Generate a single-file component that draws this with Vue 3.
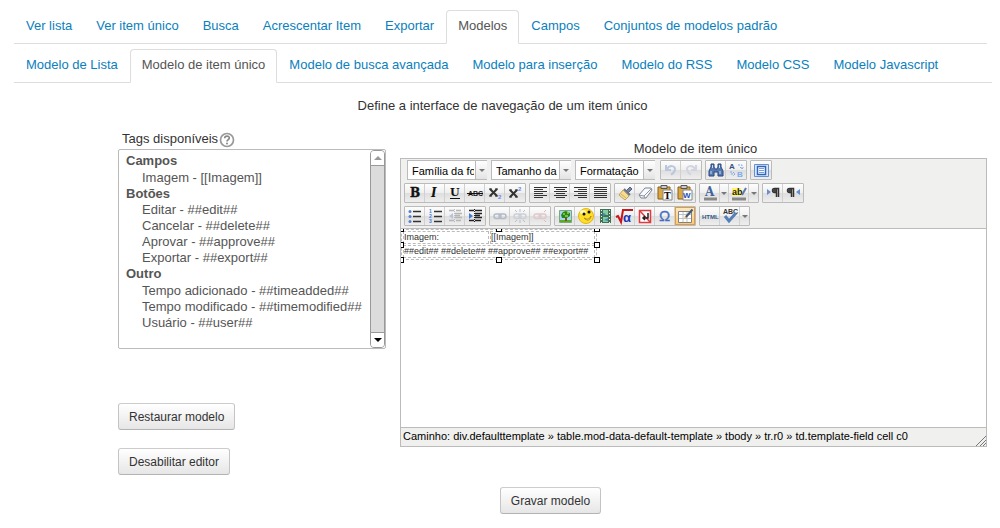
<script setup>
import { ref } from 'vue'

const mainTabs = ['Ver lista', 'Ver item único', 'Busca', 'Acrescentar Item', 'Exportar', 'Modelos', 'Campos', 'Conjuntos de modelos padrão']
const subTabs = ['Modelo de Lista', 'Modelo de item único', 'Modelo de busca avançada', 'Modelo para inserção', 'Modelo do RSS', 'Modelo CSS', 'Modelo Javascript']

const tagGroups = [
  { label: 'Campos', tags: ['Imagem - [[Imagem]]'] },
  { label: 'Botões', tags: ['Editar - ##edit##', 'Cancelar - ##delete##', 'Aprovar - ##approve##', 'Exportar - ##export##'] },
  { label: 'Outro', tags: ['Tempo adicionado - ##timeadded##', 'Tempo modificado - ##timemodified##', 'Usuário - ##user##'] }
]
const selectedTags = ref([])

const dropdowns = ['Família da fonte', 'Tamanho da fonte', 'Formatação']

const lines = (spans) => spans.map(([x, w], i) => `<path d="M${x} ${4.5 + i * 2}h${w}" stroke="#333"/>`).join('')
const serif = 'font-family="DejaVu Serif, serif" font-weight="bold"'
const sans = 'font-family="Liberation Sans, Arial, sans-serif" font-weight="bold"'
const link = (c) => `<g fill="none" stroke="${c}" stroke-width="1.5"><rect x="4" y="8" width="7" height="4.5" rx="2.2"/><rect x="9" y="8" width="7" height="4.5" rx="2.2"/></g>`
const clipboard = '<path d="M3 4h12v12H3z" fill="#d9a843" stroke="#87611d"/><path d="M6 2.5h6v3H6z" fill="#c9c9d2" stroke="#555"/><path d="M8 7h9v10H8z" fill="#fff" stroke="#888"/>'

const icons = {
  undo: '<path d="M5 5v5h5M5.5 9.5c3-5 9-4 8.500 0-.3 2-2 4-4 5" fill="none" stroke="#bac7dd" stroke-width="2"/>',
  redo: '<path d="M15 5v5h-5M14.500 9.500c-3-5-9-4-8.500 0 .3 2 2 4 4 5" fill="none" stroke="#d1d5df" stroke-width="2"/>',
  find: '<path d="M5 4h3v3l1 2h2l1-2V4h3v3l2 4v5h-5v-4H8v4H3v-5l2-4z" fill="#5678b0" stroke="#28487f"/><path d="M5 11v3M14 11v3M6.500 5v3M13.500 5v3" stroke="#c4daf5"/>',
  replace: `<text x="3" y="9" font-size="8" ${sans} fill="#38537f">A</text><text x="11" y="17" font-size="8" ${sans} fill="#7eaaf0">B</text><path d="M5 11v3h4M7 12l2 2-2 2M12 5h4v4M14 7l2 2 2-2" fill="none" stroke="#7ea9e8" stroke-dasharray="2 1"/>`,
  full: '<path d="M3.500 4.500h14v12h-14z" fill="#d9e9fd" stroke="#668fcf"/><path d="M6.500 6.500h8v8h-8z" fill="#fff" stroke="#3264b7" stroke-width="1.500"/><path d="M8 8.500h5M8 10.500h5M8 12.500h5" stroke="#72a0e4"/>',
  bold: `<text x="5" y="14" font-size="12" ${serif} stroke="#111" stroke-width=".4" fill="#111">B</text>`,
  italic: `<text x="6" y="14" font-size="12" ${serif} font-style="italic" fill="#111">I</text>`,
  underline: `<text x="5" y="13" font-size="11" ${serif} fill="#111">U</text><path d="M5 15.500h10" stroke="#111"/>`,
  strike: `<text x="3" y="13" font-size="7" ${sans} fill="#111">ABC</text><path d="M2 10.500h16" stroke="#111"/>`,
  sub: `<path d="M5 6l7 7M12 6l-7 7" stroke="#333" stroke-width="2"/><path d="M4 6h3M10 6h3M4 13h3M10 13h3" stroke="#333"/><text x="13" y="16" font-size="6" ${sans} fill="#6688e8">2</text>`,
  sup: `<path d="M5 7l7 7M12 7l-7 7" stroke="#333" stroke-width="2"/><path d="M4 7h3M10 7h3M4 14h3M10 14h3" stroke="#333"/><text x="13" y="8" font-size="6" ${sans} fill="#6688e8">2</text>`,
  left: lines([[4, 13], [4, 9], [4, 13], [4, 9], [4, 13], [4, 9]]),
  center: lines([[4, 13], [6, 9], [4, 13], [6, 9], [4, 13], [6, 9]]),
  right: lines([[4, 13], [8, 9], [4, 13], [8, 9], [4, 13], [8, 9]]),
  justify: lines([[4, 13], [4, 13], [4, 13], [4, 13], [4, 13], [4, 13]]),
  clean: '<path d="M11 8l4-4 2 2-4 4z" fill="#7886a5" stroke="#56617c"/><path d="M8 7l6 6-4 4-6-5z" fill="#f6dd93" stroke="#c8a355"/><path d="M9 6l6 6" stroke="#66728b" stroke-width="2"/><path d="M6 11l5 4" stroke="#d4ae5c"/>',
  eraser: '<path d="M4 12l6-7h6l1 2-6 8H6z" fill="#f8faff" stroke="#7b8291"/><path d="M4 12l5 1 7-7M9 13l1 2" fill="none" stroke="#8d95a3"/>',
  pasteText: clipboard + `<text x="9" y="16" font-size="9" ${serif} fill="#111">T</text>`,
  pasteWord: clipboard + `<text x="8" y="15" font-size="8" ${sans} fill="#2452b4">W</text>`,
  color: `<text x="5" y="13" font-size="12" ${serif} fill="#41639d">A</text><path d="M4 16h13" stroke="#888" stroke-width="3"/>`,
  highlight: `<path d="M3 5h9v8H3z" fill="#fff46a"/><text x="3" y="12" font-size="9" ${sans} fill="#222">ab</text><path d="M17 5l-4 7" stroke="#6279a1" stroke-width="2"/><path d="M3 16h14" stroke="#888" stroke-width="3"/>`,
  ltr: '<path d="M4 6l4 3-4 3z" fill="#668fd0"/><path d="M15.500 14V5.500h-4a2 2 0 0 0 0 4h2M13.500 6v8" fill="none" stroke="#333" stroke-width="1.500"/><path d="M13 6h-2a1.500 1.500 0 0 0 0 3h2z" fill="#444"/>',
  rtl: '<path d="M17 6l-4 3 4 3z" fill="#668fd0"/><path d="M10.500 14V5.500h-4a2 2 0 0 0 0 4h2M8.500 6v8" fill="none" stroke="#333" stroke-width="1.500"/><path d="M8 6H6a1.500 1.500 0 0 0 0 3h2z" fill="#444"/>',
  ul: '<path d="M8 5.500h8M8 10.500h8M8 15.500h8" stroke="#333" stroke-width="1.500"/><g fill="#557fd2"><circle cx="5" cy="5.500" r="1.500"/><circle cx="5" cy="10.500" r="1.500"/><circle cx="5" cy="15.500" r="1.500"/></g>',
  ol: `<path d="M9 5.500h8M9 10.500h8M9 15.500h8" stroke="#333" stroke-width="1.500"/><g font-size="5" ${sans} fill="#4779d8"><text x="4" y="7">1</text><text x="4" y="12">2</text><text x="4" y="17">3</text></g>`,
  outdent: '<path d="M4 4.500h5M11 4.500h5M10 7.500h7M10 9.500h5M10 11.500h7M4 14.500h5M11 14.500h5" stroke="#b5b5b5" stroke-width="1.500"/><path d="M9.500 3v14" stroke="#bbb" stroke-dasharray="1 1"/><path d="M8 7l-4 3 4 3z" fill="#b7c4df"/>',
  indent: '<path d="M4 4.500h5M10 4.500h7M10 7.500h7M10 9.500h5M10 11.500h7M4 14.500h5M10 14.500h6" stroke="#222" stroke-width="1.500"/><path d="M9.500 3v14" stroke="#222" stroke-dasharray="1 1"/><path d="M4 7l4 3-4 3z" fill="#4779d8"/>',
  link: link('#b3bac7'),
  unlink: link('#cbd0d7') + '<path d="M5 4l2 2M10 3v3M15 4l-2 2M5 16l2-2M10 17v-3M15 16l-2-2" stroke="#b6bfca"/>',
  nolink: link('#dfc9cb') + '<path d="M14 6l2-2M14 14l2 2" stroke="#ddbbc0"/>',
  image: '<path d="M4.500 4.500h12v12h-12z" fill="#a9d4f4" stroke="#7aa879"/><path d="M5 14h11v2H5z" fill="#5dad24"/><path d="M10 10h2v5h-2z" fill="#76501b"/><path d="M6 9l2-3 3-1 4 2v3l-3 2H7z" fill="#27871c"/><path d="M8 8h2M12 7h2M10 10h3" stroke="#a3d343" stroke-width="1.500"/>',
  smile: '<circle cx="11" cy="10" r="7.500" fill="#ffdf26" stroke="#e3b617"/><ellipse cx="8" cy="6" rx="3" ry="2" fill="#fff8b0"/><circle cx="9" cy="8" r="1.500" fill="#111"/><circle cx="14" cy="6" r="1.500" fill="#111"/><path d="M9 12c3 2 6 1 7-2-1 5-4 5-7 2" fill="#fff" stroke="#b48b12"/>',
  media: '<path d="M5 3h11v14H5z" fill="#427052"/><path d="M8 4h5v5H8zM8 11h5v5H8z" fill="#83caa5"/><path d="M6.500 4v13M14.500 4v13" stroke="#eef7ef" stroke-dasharray="1 2"/><path d="M8 7l3 1-3 3zM9 14l4-2v3z" fill="#3d88b4"/>',
  math: `<path d="M1 11l2-1 3 6L8 4h10" fill="none" stroke="#c91419" stroke-width="2"/><text x="8" y="16" font-size="13" ${sans} fill="#2036b8">α</text>`,
  nbsp: '<path d="M4.500 4.500h11v12h-11z" fill="#fff" stroke="#dd3a41" stroke-width="1.500"/><path d="M5 5l10 11" stroke="#dd3a41" stroke-width="1.500"/><path d="M13 7v5H8M10 10l-2 2 2 2" fill="none" stroke="#222" stroke-width="1.500"/>',
  omega: `<text x="4" y="15" font-size="15" font-family="Liberation Sans, Arial, sans-serif" fill="#416ec1" stroke="#416ec1" stroke-width=".3">Ω</text>`,
  table: '<path d="M3.500 5.500h13v11h-13z" fill="#fff" stroke="#7a828b"/><path d="M4 8.500h12M4 12.500h12M8 6v10M12 6v10" stroke="#bdc2cb"/><path d="M17.500 3.500l-7 8" stroke="#435873" stroke-width="2"/><path d="M10 10l2 2-3 1z" fill="#e8bd64"/>',
  html: `<text x="2" y="13" font-size="6" ${sans} fill="#335985">HTML</text>`,
  spell: `<text x="3" y="8" font-size="7" ${sans} fill="#333">ABC</text><path d="M5 10l4 5 7-8" fill="none" stroke="#557fb8" stroke-width="3"/>`
}

const b = (icon, title, extra = {}) => ({ icon, title, ...extra })
const topGroups = [
  [b('undo', 'Desfazer', { off: true }), b('redo', 'Refazer', { off: true })],
  [b('find', 'Localizar'), b('replace', 'Substituir')],
  [b('full', 'Tela cheia')]
]
const toolRows = [
  [
    [b('bold', 'Negrito'), b('italic', 'Itálico'), b('underline', 'Sublinhado'), b('strike', 'Tachado'), b('sub', 'Subscrito'), b('sup', 'Sobrescrito')],
    [b('left', 'Alinhar à esquerda'), b('center', 'Centralizar'), b('right', 'Alinhar à direita'), b('justify', 'Justificar')],
    [b('clean', 'Limpar código'), b('eraser', 'Remover formatação'), b('pasteText', 'Colar como texto'), b('pasteWord', 'Colar do Word')],
    [b('color', 'Cor do texto', { menu: true }), b('highlight', 'Cor de fundo', { menu: true })],
    [b('ltr', 'Da esquerda para a direita'), b('rtl', 'Da direita para a esquerda')]
  ],
  [
    [b('ul', 'Lista'), b('ol', 'Lista numerada'), b('outdent', 'Diminuir recuo', { off: true }), b('indent', 'Aumentar recuo')],
    [b('link', 'Inserir link', { off: true }), b('unlink', 'Remover link', { off: true }), b('nolink', 'Impedir link', { off: true })],
    [b('image', 'Imagem'), b('smile', 'Emoticon'), b('media', 'Mídia'), b('math', 'Equação'), b('nbsp', 'Espaço'), b('omega', 'Símbolo'), b('table', 'Tabela', { on: true })],
    [b('html', 'Código HTML'), b('spell', 'Ortografia', { menu: true })]
  ]
]

const path = ['div.defaulttemplate', 'table.mod-data-default-template', 'tbody', 'tr.r0', 'td.template-field cell c0']
const handles = ['n', 'ne', 'w', 'e', 'sw', 's', 'se', 'nw']
</script>

<template>
  <main class="page">
    <nav class="tabs main-tabs">
      <a v-for="t in mainTabs" :key="t" href="#" :class="{ active: t === 'Modelos' }">{{ t }}</a>
    </nav>
    <nav class="tabs sub-tabs">
      <a v-for="t in subTabs" :key="t" href="#" :class="{ active: t === 'Modelo de item único' }">{{ t }}</a>
    </nav>
    <p class="intro">Define a interface de navegação de um item único</p>

    <div class="columns">
      <section class="side">
        <div class="side-label">
          <label for="tags">Tags disponíveis</label>
          <button class="help" type="button" aria-label="Ajuda">
            <svg width="16" height="16" viewBox="0 0 16 16"><circle cx="8" cy="8" r="6.500" fill="#fff" stroke="#999" stroke-width="1.700" /><path d="M5.700 6.300c0-3 4.800-2.800 4.600-.2-.1 1.500-2.300 1.700-2.300 3.400" fill="none" stroke="#888" stroke-width="1.700" /><circle cx="8" cy="11.500" r="1" fill="#888" /></svg>
          </button>
        </div>
        <div class="list">
          <select id="tags" v-model="selectedTags" multiple size="12">
            <optgroup v-for="g in tagGroups" :key="g.label" :label="g.label">
              <option v-for="t in g.tags" :key="t">{{ t }}</option>
            </optgroup>
          </select>
          <div class="scrollbar" aria-hidden="true">
            <span class="scroll-end"><svg width="8" height="4" viewBox="0 0 8 4"><path d="M0 4l4-4 4 4z" fill="#999" /></svg></span>
            <span class="scroll-end"><svg width="8" height="4" viewBox="0 0 8 4"><path d="M0 0h8L4 4z" fill="#000" /></svg></span>
          </div>
        </div>
        <button class="btn restore" type="button">Restaurar modelo</button>
        <button class="btn" type="button">Desabilitar editor</button>
      </section>

      <section class="main">
        <h2>Modelo de item único</h2>
        <div class="editor">
          <div class="toolbar">
            <div class="row first">
              <label v-for="d in dropdowns" :key="d" class="drop">
                <select :aria-label="d"><option>{{ d }}</option></select>
                <span class="drop-arrow"><i class="caret"></i></span>
              </label>
              <div class="groups">
                <div v-for="(g, i) in topGroups" :key="i" class="group">
                  <button v-for="t in g" :key="t.icon" type="button" class="tool" :disabled="t.off" :aria-label="t.title">
                    <svg width="20" height="20" viewBox="0 0 20 20" v-html="icons[t.icon]"></svg>
                  </button>
                </div>
              </div>
            </div>
            <div v-for="(r, n) in toolRows" :key="n" class="row">
              <div v-for="(g, i) in r" :key="i" class="group">
                <button v-for="t in g" :key="t.icon" type="button" class="tool" :class="{ on: t.on, split: t.menu }" :disabled="t.off" :aria-label="t.title">
                  <svg width="20" height="20" viewBox="0 0 20 20" v-html="icons[t.icon]"></svg>
                  <span v-if="t.menu" class="split-arrow"><i class="caret"></i></span>
                </button>
              </div>
            </div>
          </div>
          <div class="canvas">
            <div class="selection">
              <table>
                <tbody>
                  <tr><td class="field">Imagem:</td><td>[[Imagem]]</td></tr>
                  <tr><td colspan="2">##edit## ##delete## ##approve## ##export##</td></tr>
                </tbody>
              </table>
              <span v-for="h in handles" :key="h" class="handle" :class="h"></span>
            </div>
          </div>
          <div class="status">
            <span>Caminho: <template v-for="(p, i) in path" :key="p"><template v-if="i"> » </template><a href="#">{{ p }}</a></template></span>
            <svg class="grip" width="10" height="10" viewBox="0 0 10 10"><path d="M0 10L10 0M4 10l6-6M7 10l3-3" stroke="#777" fill="none" /></svg>
          </div>
        </div>
      </section>
    </div>
    <div class="submit"><button class="btn" type="button">Gravar modelo</button></div>
  </main>
</template>

<style>
body { background: #fff; }
</style>

<style scoped>
.page {
  padding-top: 10px;
  font: 13px/20px "Liberation Sans", Arial, sans-serif;
  color: #333;
}
button, select { font: inherit; color: inherit; box-sizing: border-box; }
.tabs {
  display: flex;
  border-bottom: 1px solid #ddd;
}
.main-tabs { margin: 0 13px 5px 14px; }
.sub-tabs { margin: 0 8px 0 14px; }
.tabs a {
  padding: 5px 11px 7px;
  margin-bottom: -1px;
  border: 1px solid transparent;
  border-radius: 4px 4px 0 0;
  color: #0a80bd;
  text-decoration: none;
  white-space: nowrap;
}
.tabs a.active { color: #555; background: #fff; border-color: #ddd #ddd #fff; }
.intro { margin: 13px 0 0; padding-left: 5px; text-align: center; }
.columns { display: flex; gap: 14px; padding: 13px 13px 0 118px; }
.side { flex: none; width: 268px; display: flex; flex-direction: column; align-items: flex-start; }
.side-label { display: flex; align-items: center; gap: 1px; padding-left: 4px; }
.help { display: flex; padding: 1px 0 0; border: 0; background: none; }
.list {
  position: relative;
  width: 100%;
  height: 200px;
  box-sizing: border-box;
  border: 1px solid #bbb;
  border-radius: 2px;
}
.list select {
  display: block;
  width: 100%;
  height: 100%;
  padding: 3px 0 0 4px;
  border: 0;
  background: transparent;
  color: #555;
  line-height: 16px;
  overflow: hidden;
  outline: 0;
}
.list optgroup { font-weight: bold; padding: 0 2px 0 1px; }
.list option { font-weight: normal; min-height: 0; padding: 0 2px 1px 18px; line-height: 16px; }
.list option::before { content: none; }
.scrollbar {
  position: absolute;
  top: 0;
  right: 0;
  bottom: 0;
  width: 15px;
  box-sizing: border-box;
  display: flex;
  flex-direction: column;
  justify-content: space-between;
  background: #dcdcdc;
  border: 1px solid #999;
  border-radius: 4px;
  overflow: hidden;
}
.scroll-end { height: 14px; display: flex; align-items: center; justify-content: center; background: #fff; border: 0 solid #999; }
.scroll-end:first-child { border-bottom-width: 1px; }
.scroll-end:last-child { border-top-width: 1px; }
.btn {
  height: 27px;
  padding: 0 10px;
  border: 1px solid #bbb;
  border-color: #ccc #c4c4c4 #b3b3b3;
  border-radius: 3px;
  background: linear-gradient(#fff, #e6e6e6);
  color: #333;
  font-size: 12px;
  white-space: nowrap;
}
.restore { margin: 54px 0 18px; }
.main { flex: 1; min-width: 0; padding-top: 10px; }
h2 { margin: 0; padding-left: 4px; font-size: 13px; font-weight: normal; line-height: 19px; text-align: center; }
.editor { border: 1px solid #bbb; }
.toolbar { display: flex; flex-direction: column; gap: 3px; padding: 1px 3px 2px; background: #f0f0ee; border-bottom: 1px solid #bbb; }
.row { display: flex; gap: 3px; height: 20px; }
.row.first { gap: 4px; padding-left: 3px; }
.groups { display: flex; gap: 3px; padding-left: 1px; }
.drop { position: relative; display: block; width: 80px; height: 20px; }
.drop select {
  appearance: none;
  display: block;
  width: 100%;
  height: 20px;
  padding: 0 12px 0 4px;
  border: 1px solid #bbb;
  border-radius: 0;
  background: #fff;
  color: #000;
  font-size: 11px;
  text-overflow: clip;
}
.drop-arrow {
  position: absolute;
  top: 1px;
  right: 0;
  bottom: 1px;
  width: 11px;
  display: flex;
  align-items: center;
  justify-content: center;
  background: linear-gradient(#fff, #e4e4e4);
  border-left: 1px solid #bbb;
  pointer-events: none;
}
.caret { border: 3px solid transparent; border-top: 3px solid #777; border-bottom: 0; }
.group { display: flex; box-sizing: border-box; height: 20px; border: 1px solid #bbb; border-radius: 1px; background: linear-gradient(#fdfdfd, #efefef 50%, #dedede 51%, #eee); }
.tool { display: flex; width: 20px; height: 18px; padding: 0; border: 0; border-right: 1px solid #d0d0d0; background: none; overflow: hidden; align-items: center; }
.tool:last-child { border-right: 0; }
.tool svg { flex: none; margin: -1px -1px -1px 0; }
.tool.split { width: 29px; }
.tool.on { background: linear-gradient(#fdeac2, #ffc66d); box-shadow: inset 0 0 0 1px #d99d4c; }
.split-arrow { flex: 1; height: 18px; display: flex; align-items: center; justify-content: center; border-left: 1px solid #d0d0d0; }
.canvas { height: 198px; overflow: hidden; background: #fff; }
.selection { position: relative; width: 196px; }
table { width: 100%; border: 1px dashed #bbb; border-spacing: 1px; font-size: 9px; line-height: 10px; color: #333; }
td { padding: 0 0 1px; border: 1px dashed #bbb; white-space: nowrap; }
.field { width: 84px; }
.handle { position: absolute; width: 6px; height: 6px; box-sizing: border-box; border: 1px solid #000; background: #fff; }
.nw, .n, .ne { top: -3px; }
.w, .e { top: calc(50% - 3px); }
.sw, .s, .se { bottom: -3px; }
.nw, .w, .sw { left: -3px; }
.n, .s { left: calc(50% - 3px); }
.ne, .e, .se { right: -3px; }
.status { position: relative; height: 18px; padding-left: 2px; border-top: 1px solid #bbb; background: #f0f0ee; color: #000; font-size: 11px; line-height: 17px; }
.status a { color: inherit; text-decoration: none; }
.grip { position: absolute; right: 0; bottom: 0; }
.submit { padding: 12px 0 14px 101px; text-align: center; }
</style>
